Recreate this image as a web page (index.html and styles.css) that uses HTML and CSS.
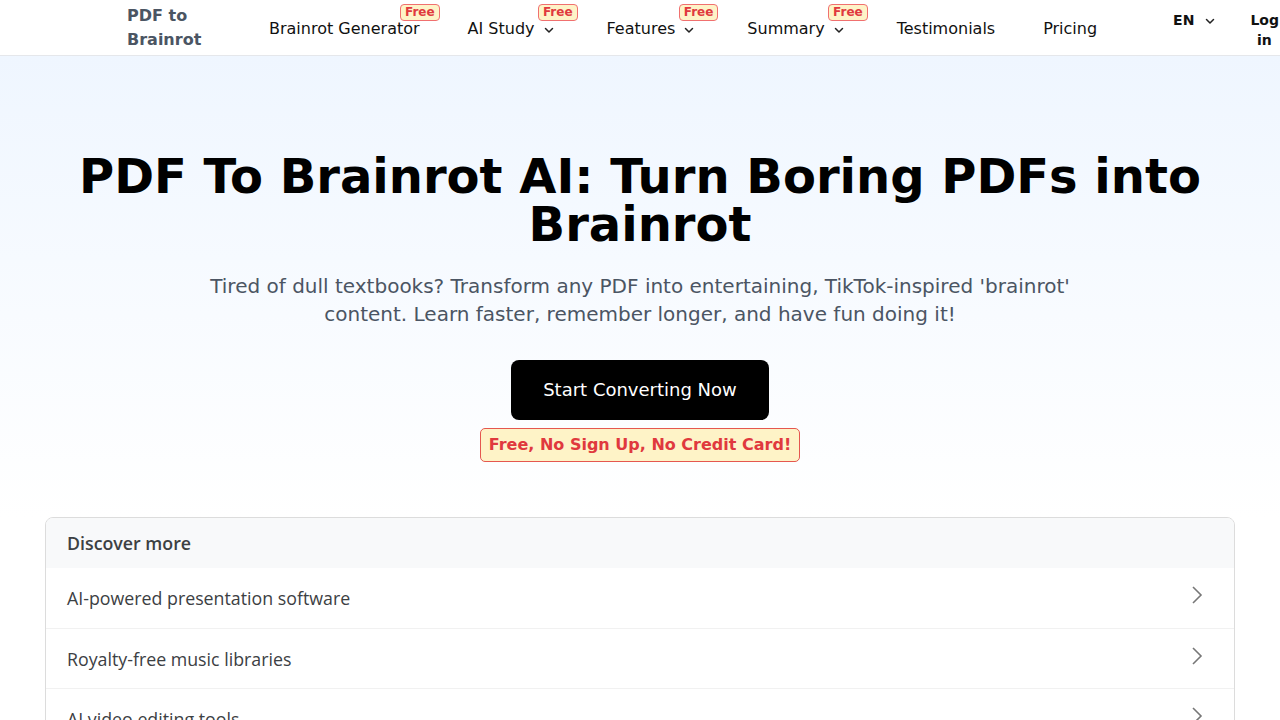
FILE: index.html
```html
<!DOCTYPE html>
<html lang="en">
<head>
<meta charset="utf-8">
<title>PDF To Brainrot AI</title>
<link rel="stylesheet" href="styles.css">
</head>
<body>
<header class="topbar">
  <a class="logo">PDF to Brainrot</a>
  <nav class="nav">
    <a class="nav-item">Brainrot Generator<span class="free">Free</span></a>
    <a class="nav-item has-menu">AI Study<svg class="chev" viewBox="0 0 12 12"><path d="M2.5 4.5 6 8l3.5-3.5"/></svg><span class="free">Free</span></a>
    <a class="nav-item has-menu">Features<svg class="chev" viewBox="0 0 12 12"><path d="M2.5 4.5 6 8l3.5-3.5"/></svg><span class="free">Free</span></a>
    <a class="nav-item has-menu">Summary<svg class="chev" viewBox="0 0 12 12"><path d="M2.5 4.5 6 8l3.5-3.5"/></svg><span class="free">Free</span></a>
    <a class="nav-item">Testimonials</a>
    <a class="nav-item">Pricing</a>
  </nav>
  <div class="right">
    <a class="lang">EN<svg class="chev" viewBox="0 0 12 12"><path d="M2.5 4.5 6 8l3.5-3.5"/></svg></a>
    <a class="login">Log in</a>
  </div>
</header>
<main>
  <section class="hero">
    <h1 class="title">PDF To Brainrot AI: Turn Boring PDFs into Brainrot</h1>
    <p class="sub">Tired of dull textbooks? Transform any PDF into entertaining, TikTok-inspired 'brainrot' content. Learn faster, remember longer, and have fun doing it!</p>
    <a class="cta">Start Converting Now</a>
    <div class="nocard">Free, No Sign Up, No Credit Card!</div>
  </section>
  <section class="discover">
    <div class="disc-head">Discover more</div>
    <a class="disc-row"><span>AI-powered presentation software</span><svg class="arrow" viewBox="0 0 12 20"><path d="M2 2l8 8-8 8"/></svg></a>
    <a class="disc-row"><span>Royalty-free music libraries</span><svg class="arrow" viewBox="0 0 12 20"><path d="M2 2l8 8-8 8"/></svg></a>
    <a class="disc-row"><span>AI video editing tools</span><svg class="arrow" viewBox="0 0 12 20"><path d="M2 2l8 8-8 8"/></svg></a>
  </section>
</main>
</body>
</html>
```
FILE: styles.css
```css
* { box-sizing: border-box; }
html, body { margin: 0; padding: 0; }
body {
  font-family: "DejaVu Sans", sans-serif;
  color: #111;
  background: #fff;
  overflow: hidden;
  width: 1280px;
  height: 720px;
}
a { color: inherit; text-decoration: none; }

.topbar {
  height: 56px;
  border-bottom: 1px solid #e5e7eb;
  display: flex;
  align-items: center;
  padding-left: 127px;
  background: #fff;
  white-space: nowrap;
}
.logo {
  width: 100px;
  white-space: normal;
  font-weight: 700;
  font-size: 16px;
  line-height: 24px;
  color: #4b5563;
  margin-top: 1px;
}
.nav {
  display: flex;
  align-items: center;
  margin-left: 42px;
  gap: 48px;
}
.nav-item {
  position: relative;
  display: flex;
  align-items: center;
  font-size: 16px;
  line-height: 24px;
  color: #111;
  padding-top: 3px;
}
.chev {
  width: 12px;
  height: 12px;
  margin-left: 8px;
  margin-top: 2px;
  fill: none;
  stroke: #222;
  stroke-width: 1.5;
  stroke-linecap: round;
  stroke-linejoin: round;
}
.has-menu .chev { margin-left: 8px; margin-right: 4px; }
.free {
  position: absolute;
  top: -10px;
  right: -20px;
  font-size: 12px;
  font-weight: 700;
  line-height: 15px;
  padding: 0 4px;
  color: #e0393e;
  background: #fef3c7;
  border: 1px solid #f0706f;
  border-radius: 4px;
}
.has-menu .free { right: -19px; }
.right {
  display: flex;
  align-items: flex-start;
  margin-left: 76px;
  align-self: flex-start;
  padding-top: 10px;
}
.lang {
  display: flex;
  align-items: center;
  font-weight: 700;
  font-size: 14px;
  line-height: 20px;
}
.lang .chev { margin-left: 10px; }
.login {
  margin-left: 34px;
  width: 28px;
  white-space: normal;
  text-align: center;
  font-weight: 700;
  font-size: 14px;
  line-height: 20px;
}

.hero {
  background: linear-gradient(to bottom, #eff6ff 0%, #ffffff 100%);
  padding: 96px 0 56px;
  text-align: center;
  display: flex;
  flex-direction: column;
  align-items: center;
}
.title {
  margin: 0;
  font-size: 48px;
  line-height: 48px;
  font-weight: 700;
  color: #000;
  max-width: 1180px;
}
.sub {
  margin: 24px 0 0;
  max-width: 896px;
  font-size: 20px;
  line-height: 28px;
  color: #4b5563;
}
.cta {
  margin-top: 32px;
  background: #000;
  color: #fff;
  font-size: 18px;
  line-height: 28px;
  padding: 16px 32px;
  border-radius: 8px;
}
.nocard {
  margin-top: 8px;
  background: #fef3c7;
  border: 1px solid #e5574f;
  border-radius: 5px;
  color: #e0393e;
  font-weight: 700;
  font-size: 16px;
  line-height: 24px;
  padding: 4px 8px;
}

.discover {
  margin: -1px 45px 0;
  border: 1px solid #dcdcdc;
  border-radius: 8px;
  overflow: hidden;
  font-family: "Open Sans", Roboto, sans-serif;
}
.disc-head {
  background: #f8f9fa;
  height: 50px;
  padding: 0 21px;
  display: flex;
  align-items: center;
  font-size: 17.8px;
  font-weight: 600;
  color: #3c4043;
}
.disc-row {
  display: flex;
  align-items: center;
  justify-content: space-between;
  height: 60px;
  padding: 0 31px 0 21px;
  border-top: 1px solid #f1f1f1;
  font-size: 17.8px;
  color: #3c4043;
}
.disc-head + .disc-row { border-top: none; }
.arrow {
  width: 12px;
  height: 20px;
  fill: none;
  stroke: #777;
  stroke-width: 1.6;
  margin-top: -6px;
}
```
